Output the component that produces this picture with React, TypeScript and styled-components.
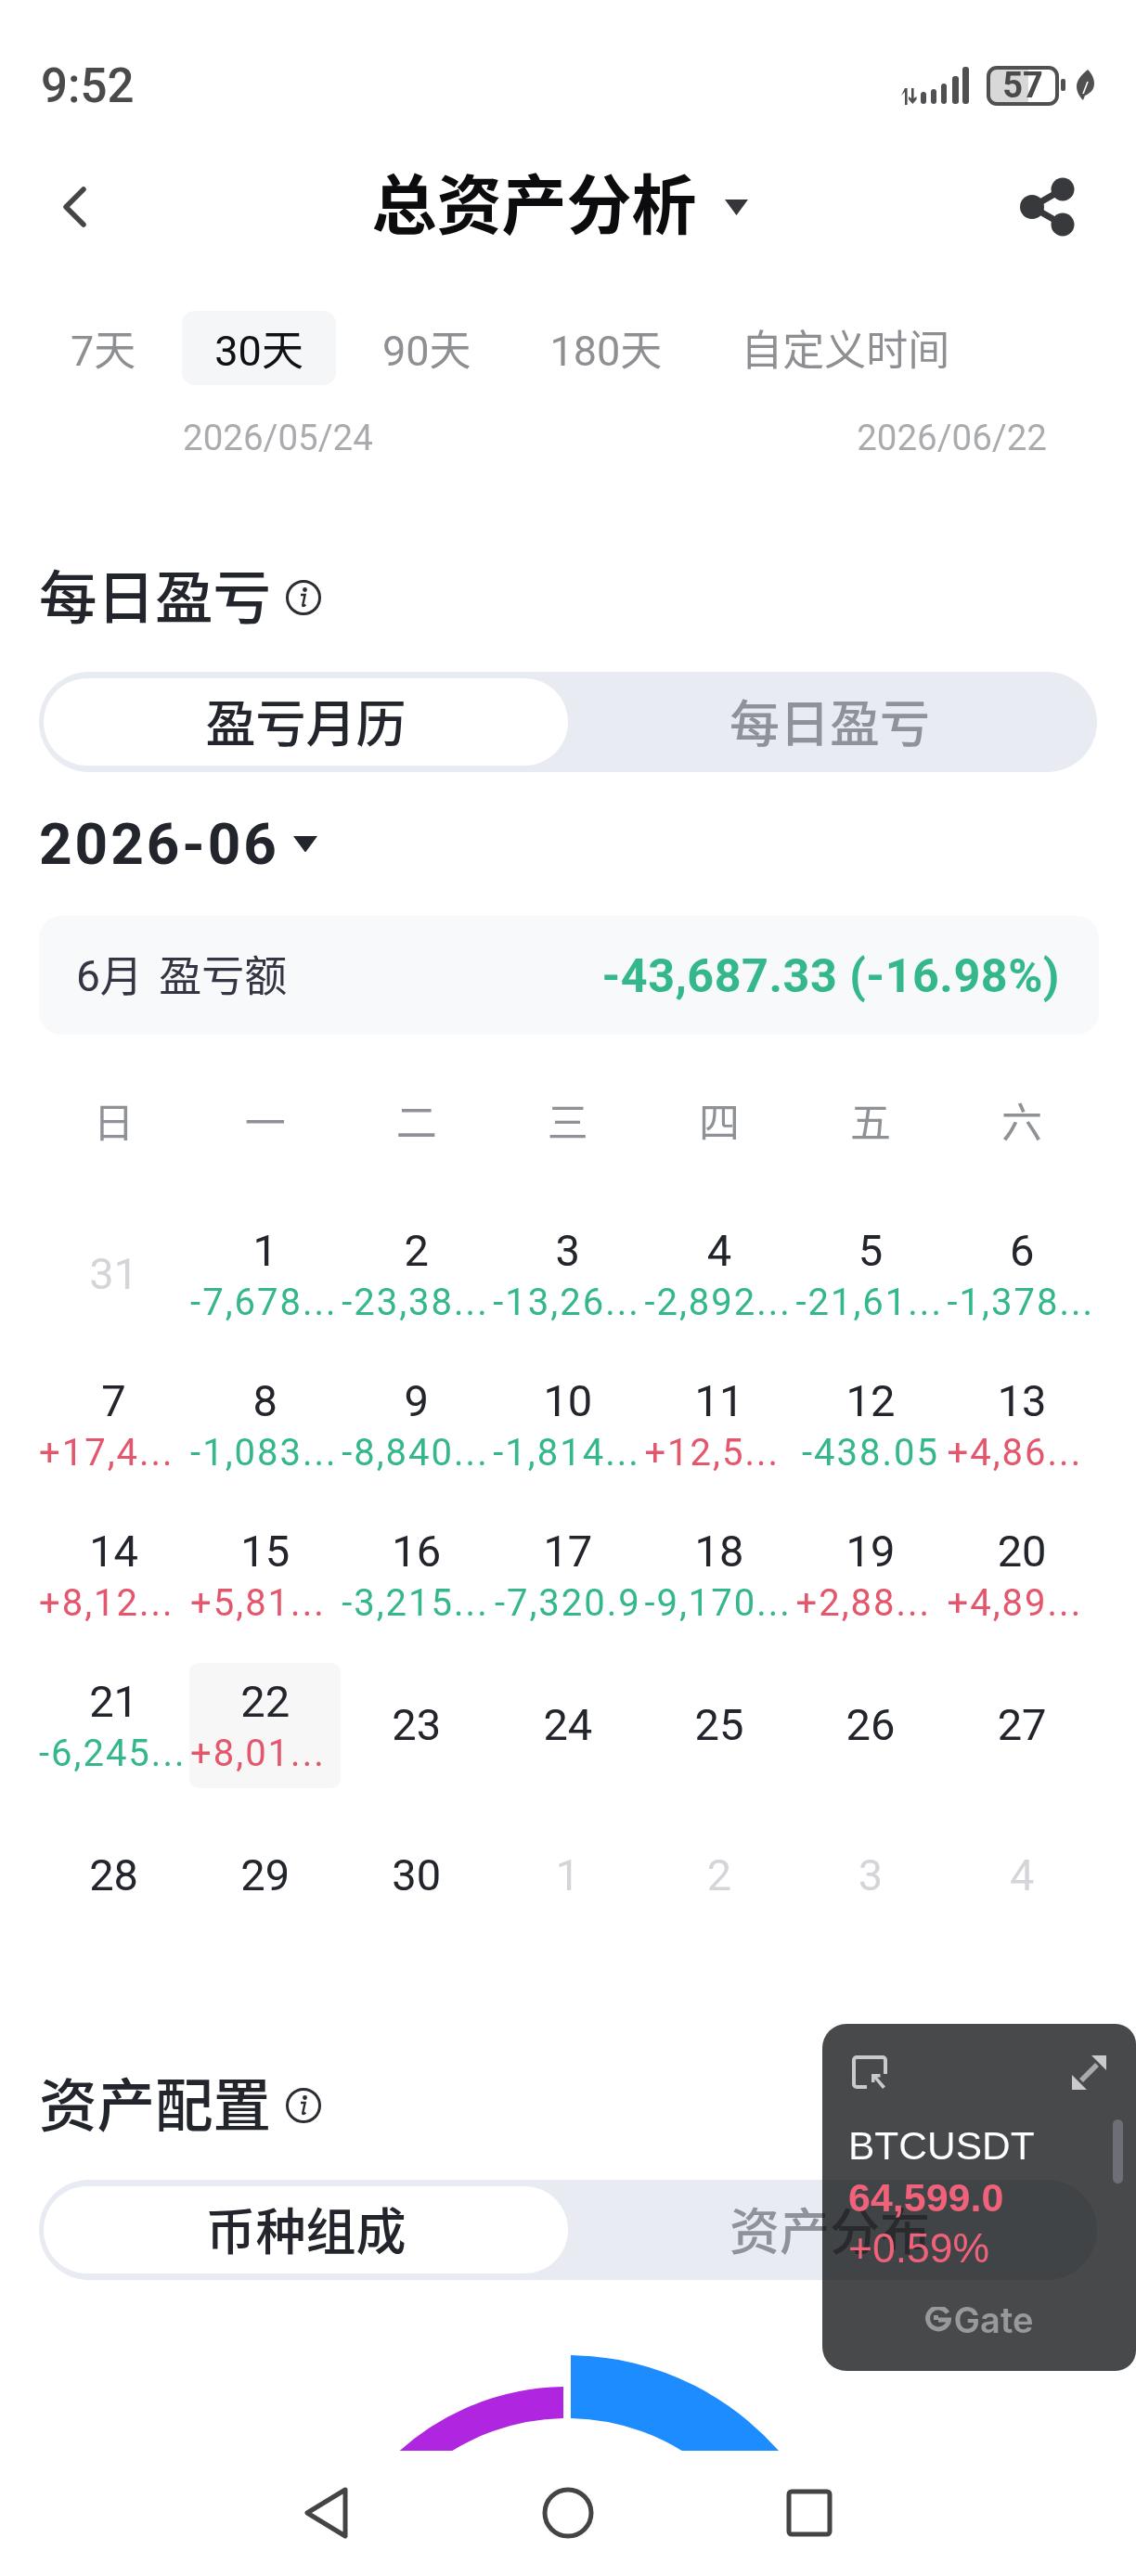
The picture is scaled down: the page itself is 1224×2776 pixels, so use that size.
import React from "react";
import styled, { createGlobalStyle } from "styled-components";

const GlobalStyle = createGlobalStyle`
  html, body {
    margin: 0;
    padding: 0;
    background: #fff;
  }
  * {
    box-sizing: border-box;
  }
`;

const FONT = `Roboto, "Noto Sans CJK SC", sans-serif`;
const GREEN = "#34b78a";
const RED = "#e4566c";

const Page = styled.div`
  position: relative;
  width: 1224px;
  height: 2776px;
  overflow: hidden;
  background: #fff;
  font-family: ${FONT};
  color: #23252c;
`;

const StatusBar = styled.div`
  display: flex;
  align-items: center;
  justify-content: space-between;
  height: 76px;
  margin-top: 54px;
  padding: 0 41px 0 44px;
`;

const Clock = styled.span`
  font-size: 51px;
  font-weight: 500;
  color: #4a4a4c;
`;

const StatusIcons = styled.div`
  display: flex;
  align-items: center;
`;

const Battery = styled.div`
  display: flex;
  align-items: center;
  justify-content: center;
  width: 78px;
  height: 43px;
  margin-left: 17px;
  border: 4px solid #505052;
  border-radius: 11px;
  background: linear-gradient(90deg, #d8d8d8 0 58%, #fff 58%);
  font-size: 38px;
  font-weight: 700;
  line-height: 1;
  color: #4a4a4c;
`;

const Header = styled.header`
  display: flex;
  align-items: center;
  justify-content: space-between;
  height: 182px;
  padding: 4px 64px 0 66px;
`;

const TitleWrap = styled.div`
  display: flex;
  align-items: center;
  gap: 30px;
  margin-left: 14px;
`;

const Title = styled.h1`
  margin: 0;
  font-size: 70px;
  font-weight: 700;
  line-height: 1;
  color: #0c0c0e;
`;

const RangeTabs = styled.div`
  display: flex;
  gap: 15px;
  margin-top: 23px;
  padding-left: 41px;
`;

const RangeTab = styled.div<{ $active?: boolean }>`
  display: flex;
  align-items: center;
  height: 80px;
  padding: 0 35px 2px;
  border-radius: 14px;
  background: ${(p) => (p.$active ? "#f4f6f8" : "transparent")};
  font-size: 45px;
  color: ${(p) => (p.$active ? "#111" : "#8d8f93")};
`;

const DateRow = styled.div`
  display: flex;
  justify-content: space-between;
  height: 40px;
  margin-top: 37px;
  padding: 0 96px 0 197px;
  font-size: 38.500px;
  line-height: 40px;
  color: #a9abae;
`;

const SectionHead = styled.div<{ $top: number }>`
  display: flex;
  align-items: center;
  gap: 15px;
  height: 80px;
  margin-top: ${(p) => p.$top}px;
  padding-left: 42px;
`;

const SectionTitle = styled.h2`
  margin: 0;
  padding-top: 4px;
  font-size: 62.500px;
  font-weight: 500;
  line-height: 1;
  color: #23252c;
`;

const Segment = styled.div`
  display: grid;
  grid-template-columns: 565px 1fr;
  height: 108px;
  margin: 40px 42px 0;
  padding: 7px 6px 7px 5px;
  border-radius: 54px;
  background: #e9ebf2;
`;

const SegmentItem = styled.div<{ $active?: boolean }>`
  display: flex;
  align-items: center;
  justify-content: center;
  padding-bottom: 4px;
  border-radius: 47px;
  background: ${(p) => (p.$active ? "#fff" : "transparent")};
  font-size: 54px;
  font-weight: 500;
  color: ${(p) => (p.$active ? "#23252c" : "#8f9298")};
`;

const MonthRow = styled.div`
  display: flex;
  align-items: center;
  gap: 15px;
  height: 70px;
  margin-top: 40px;
  padding: 5px 0 0 42px;
`;

const MonthText = styled.span`
  font-size: 62px;
  font-weight: 700;
  line-height: 1;
  letter-spacing: 3px;
  color: #23252c;
`;

const SummaryCard = styled.div`
  display: flex;
  align-items: center;
  justify-content: space-between;
  height: 128px;
  margin: 45px 40px 0 42px;
  padding: 0 42px 0 40px;
  border-radius: 24px;
  background: #f7f9fb;
`;

const SummaryLabel = styled.span`
  padding-bottom: 6px;
  font-size: 46px;
  word-spacing: 6px;
  color: #333642;
`;

const SummaryValue = styled.span`
  font-size: 50.300px;
  font-weight: 700;
  letter-spacing: 0.500px;
  color: ${GREEN};
`;

const WeekRow = styled.div`
  display: grid;
  grid-template-columns: repeat(7, 163.1px);
  height: 60px;
  margin-top: 66px;
  padding-left: 41px;
`;

const WeekDay = styled.div`
  font-size: 44px;
  line-height: 60px;
  text-align: center;
  color: #8e9196;
`;

const CalendarGrid = styled.div`
  display: grid;
  grid-template-columns: repeat(7, 163.1px);
  grid-auto-rows: 162px;
  margin-top: 51px;
  padding-left: 41px;
`;

const DayCell = styled.div<{ $today?: boolean }>`
  display: flex;
  flex-direction: column;
  justify-content: center;
  align-self: center;
  height: 135px;
  border-radius: 10px;
  background: ${(p) => (p.$today ? "#f7f7f7" : "transparent")};
  overflow: hidden;
`;

const DayNumber = styled.div<{ $muted?: boolean }>`
  font-size: 47px;
  line-height: 56px;
  text-align: center;
  color: ${(p) => (p.$muted ? "#d3d5d9" : "#23252c")};
`;

const DayPnl = styled.div<{ $up: boolean; $clipped: boolean }>`
  margin-bottom: -6px;
  font-size: 40px;
  line-height: 56px;
  letter-spacing: 2px;
  white-space: nowrap;
  text-align: ${(p) => (p.$clipped ? "left" : "center")};
  padding-left: ${(p) => (p.$clipped ? "1px" : "0")};
  color: ${(p) => (p.$up ? RED : GREEN)};
`;

const ChartArea = styled.div`
  display: flex;
  align-items: flex-end;
  justify-content: center;
  height: 184px;
  overflow: hidden;
`;

const NavBar = styled.nav`
  display: grid;
  grid-template-columns: repeat(3, 260px);
  justify-content: center;
  justify-items: center;
  align-items: center;
  height: 134px;
`;

const FloatWidget = styled.aside`
  position: absolute;
  left: 886px;
  top: 2181px;
  width: 338px;
  height: 374px;
  padding: 34px 32px 0 28px;
  border-radius: 26px 22px 22px 26px;
  overflow: hidden;

  &::before {
    content: "";
    position: absolute;
    inset: 0;
    background: #47494b;
    mix-blend-mode: multiply;
  }
`;

const WidgetIcons = styled.div`
  position: relative;
  display: flex;
  justify-content: space-between;
  padding-left: 4px;
`;

const WidgetText = styled.div<{ $color: string; $size: number; $bold?: boolean; $top: number }>`
  position: relative;
  margin-top: ${(p) => p.$top}px;
  font-family: "Liberation Sans", sans-serif;
  font-size: ${(p) => p.$size}px;
  font-weight: ${(p) => (p.$bold ? 700 : 400)};
  line-height: 50px;
  color: ${(p) => p.$color};
`;

const ScrollThumb = styled.div`
  position: absolute;
  left: 313px;
  top: 103px;
  width: 11px;
  height: 69px;
  border-radius: 6px;
  background: #6d6f76;
`;

const GateMark = styled.div`
  position: relative;
  display: flex;
  align-items: center;
  justify-content: center;
  gap: 3px;
  margin-top: 32px;
  margin-left: 4px;
  font-family: Inter, sans-serif;
  font-size: 38px;
  font-weight: 600;
  line-height: 40px;
  color: #97999b;
`;

const InfoIcon = () => (
  <svg width="40" height="40" viewBox="0 0 40 40" fill="none">
    <circle cx="20" cy="20" r="17.5" stroke="#2b2d33" strokeWidth="3" />
    <circle cx="21.5" cy="11.5" r="2.4" fill="#2b2d33" />
    <path d="M17 17h4.6l-2.4 11.2c-.2 1 .8 1.3 3.2-.4" stroke="#2b2d33" strokeWidth="2.4" />
  </svg>
);

const Caret = ({ size, color }: { size: number; color: string }) => (
  <svg width={size} height={size * 0.68} viewBox="0 0 25 17">
    <path d="M0 0h25L12.5 17z" fill={color} />
  </svg>
);

type Day = { n: number; pnl?: string; muted?: boolean; today?: boolean };

const days: Day[] = [
  { n: 31, muted: true },
  { n: 1, pnl: "-7,678..." },
  { n: 2, pnl: "-23,38..." },
  { n: 3, pnl: "-13,26..." },
  { n: 4, pnl: "-2,892..." },
  { n: 5, pnl: "-21,61..." },
  { n: 6, pnl: "-1,378..." },
  { n: 7, pnl: "+17,4..." },
  { n: 8, pnl: "-1,083..." },
  { n: 9, pnl: "-8,840..." },
  { n: 10, pnl: "-1,814..." },
  { n: 11, pnl: "+12,5..." },
  { n: 12, pnl: "-438.05" },
  { n: 13, pnl: "+4,86..." },
  { n: 14, pnl: "+8,12..." },
  { n: 15, pnl: "+5,81..." },
  { n: 16, pnl: "-3,215..." },
  { n: 17, pnl: "-7,320.9" },
  { n: 18, pnl: "-9,170..." },
  { n: 19, pnl: "+2,88..." },
  { n: 20, pnl: "+4,89..." },
  { n: 21, pnl: "-6,245..." },
  { n: 22, pnl: "+8,01...", today: true },
  { n: 23 },
  { n: 24 },
  { n: 25 },
  { n: 26 },
  { n: 27 },
  { n: 28 },
  { n: 29 },
  { n: 30 },
  { n: 1, muted: true },
  { n: 2, muted: true },
  { n: 3, muted: true },
  { n: 4, muted: true },
];

const ranges = ["7天", "30天", "90天", "180天", "自定义时间"];
const weekDays = ["日", "一", "二", "三", "四", "五", "六"];

export default function App() {
  return (
    <Page>
      <GlobalStyle />
      <StatusBar>
        <Clock>9:52</Clock>
        <StatusIcons>
          <svg width="76" height="44" viewBox="0 0 76 44" fill="#505052">
            <path d="M2 33l4-4v14h2.6V25H6zM13 25h2.6v11l3-2v3l-4.300 5-4.300-5v-3l3 2z" transform="translate(-1 0)" />
            <rect x="22" y="29" width="6" height="13" rx="3" />
            <rect x="33" y="26" width="6" height="16" rx="3" />
            <rect x="44" y="20" width="6" height="22" rx="3" />
            <rect x="56" y="12" width="7" height="30" rx="3" />
            <rect x="67" y="2" width="7" height="40" rx="3" />
          </svg>
          <Battery>57</Battery>
          <svg width="42" height="36" viewBox="0 0 42 36">
            <rect x="2" y="11" width="5" height="13" rx="2" fill="#505052" />
            <path d="M31 1c4 4 7 9 7 15 0 7-5 11-10 13l-2 5c-4-4-7-9-7-15 0-7 6-13 12-18z" fill="#505052" />
            <path d="M26 27l5-13" stroke="#fff" strokeWidth="1.600" />
          </svg>
        </StatusIcons>
      </StatusBar>

      <Header>
        <svg width="28" height="44" viewBox="0 0 28 44" fill="none">
          <path d="M24 3L5 22l19 19" stroke="#454547" strokeWidth="5.500" strokeLinecap="round" strokeLinejoin="round" />
        </svg>
        <TitleWrap>
          <Title>总资产分析</Title>
          <Caret size={25} color="#35363a" />
        </TitleWrap>
        <svg width="62" height="64" viewBox="0 0 62 64" fill="#38393d">
          <circle cx="47" cy="13" r="12.500" />
          <circle cx="14" cy="32" r="13" />
          <circle cx="47" cy="51" r="12.500" />
          <path d="M14 32L47 13M14 32l33 19" stroke="#38393d" strokeWidth="7" />
        </svg>
      </Header>

      <RangeTabs>
        {ranges.map((r) => (
          <RangeTab key={r} $active={r === "30天"}>
            {r}
          </RangeTab>
        ))}
      </RangeTabs>
      <DateRow>
        <span>2026/05/24</span>
        <span>2026/06/22</span>
      </DateRow>

      <SectionHead $top={112}>
        <SectionTitle>每日盈亏</SectionTitle>
        <InfoIcon />
      </SectionHead>
      <Segment>
        <SegmentItem $active>盈亏月历</SegmentItem>
        <SegmentItem>每日盈亏</SegmentItem>
      </Segment>

      <MonthRow>
        <MonthText>2026-06</MonthText>
        <Caret size={26} color="#23252c" />
      </MonthRow>

      <SummaryCard>
        <SummaryLabel>6月 盈亏额</SummaryLabel>
        <SummaryValue>-43,687.33 (-16.98%)</SummaryValue>
      </SummaryCard>

      <WeekRow>
        {weekDays.map((d) => (
          <WeekDay key={d}>{d}</WeekDay>
        ))}
      </WeekRow>

      <CalendarGrid>
        {days.map((d, i) => (
          <DayCell key={i} $today={d.today}>
            <DayNumber $muted={d.muted}>{d.n}</DayNumber>
            {d.pnl && (
              <DayPnl $up={d.pnl.startsWith("+")} $clipped={d.pnl.endsWith("...")}>
                {d.pnl}
              </DayPnl>
            )}
          </DayCell>
        ))}
      </CalendarGrid>

      <SectionHead $top={127}>
        <SectionTitle>资产配置</SectionTitle>
        <InfoIcon />
      </SectionHead>
      <Segment>
        <SegmentItem $active>币种组成</SegmentItem>
        <SegmentItem>资产分布</SegmentItem>
      </Segment>

      <ChartArea>
        <svg width="480" height="103" viewBox="372 2539 480 103">
          <path d="M607 2573A270 270 0 0 0 412.500 2660L462 2660A236 236 0 0 1 607 2607Z" fill="#b025e0" />
          <path d="M615 2539A304 304 0 0 1 853.700 2660L760 2660A236 236 0 0 0 615 2607Z" fill="#1c8cff" />
        </svg>
      </ChartArea>

      <NavBar>
        <svg width="50" height="58" viewBox="0 0 50 58" fill="none">
          <path d="M45 4L4 29l41 25z" stroke="#444" strokeWidth="5" strokeLinejoin="round" />
        </svg>
        <svg width="56" height="56" viewBox="0 0 56 56" fill="none">
          <circle cx="28" cy="28" r="25" stroke="#444" strokeWidth="5" />
        </svg>
        <svg width="50" height="52" viewBox="0 0 50 52" fill="none">
          <rect x="3" y="3" width="44" height="46" rx="3" stroke="#444" strokeWidth="5" />
        </svg>
      </NavBar>

      <FloatWidget>
        <ScrollThumb />
        <WidgetIcons>
          <svg width="38" height="37" viewBox="0 0 38 37" fill="none">
            <path d="M16 34H5a3 3 0 0 1-3-3V5a3 3 0 0 1 3-3h28a3 3 0 0 1 3 3v15" stroke="#c9cac9" strokeWidth="4" />
            <path d="M21 20v9h3.500v-3.500L33 36l3-2.500L27 23.500h3.500V20z" fill="#c9cac9" />
          </svg>
          <svg width="37" height="37" viewBox="0 0 37 37" fill="none">
            <path d="M21 0h16v16zM0 21v16h16z" fill="#c9cac9" />
            <path d="M27 10L10 27" stroke="#a9aaaa" strokeWidth="5.500" />
          </svg>
        </WidgetIcons>
        <WidgetText $color="#fff" $size={42.5} $top={36}>
          BTCUSDT
        </WidgetText>
        <WidgetText $color="#ef627a" $size={43} $bold $top={5}>
          64,599.0
        </WidgetText>
        <WidgetText $color="#ef627a" $size={44.5} $top={5}>
          +0.59%
        </WidgetText>
        <GateMark>
          <svg width="28" height="28" viewBox="0 0 28 28" fill="none">
            <path d="M24 6.500A11.500 11.500 0 1 0 25.500 14H14" stroke="#97999b" strokeWidth="5" />
            <rect x="9" y="9" width="5" height="5" fill="#97999b" />
          </svg>
          Gate
        </GateMark>
      </FloatWidget>
    </Page>
  );
}
